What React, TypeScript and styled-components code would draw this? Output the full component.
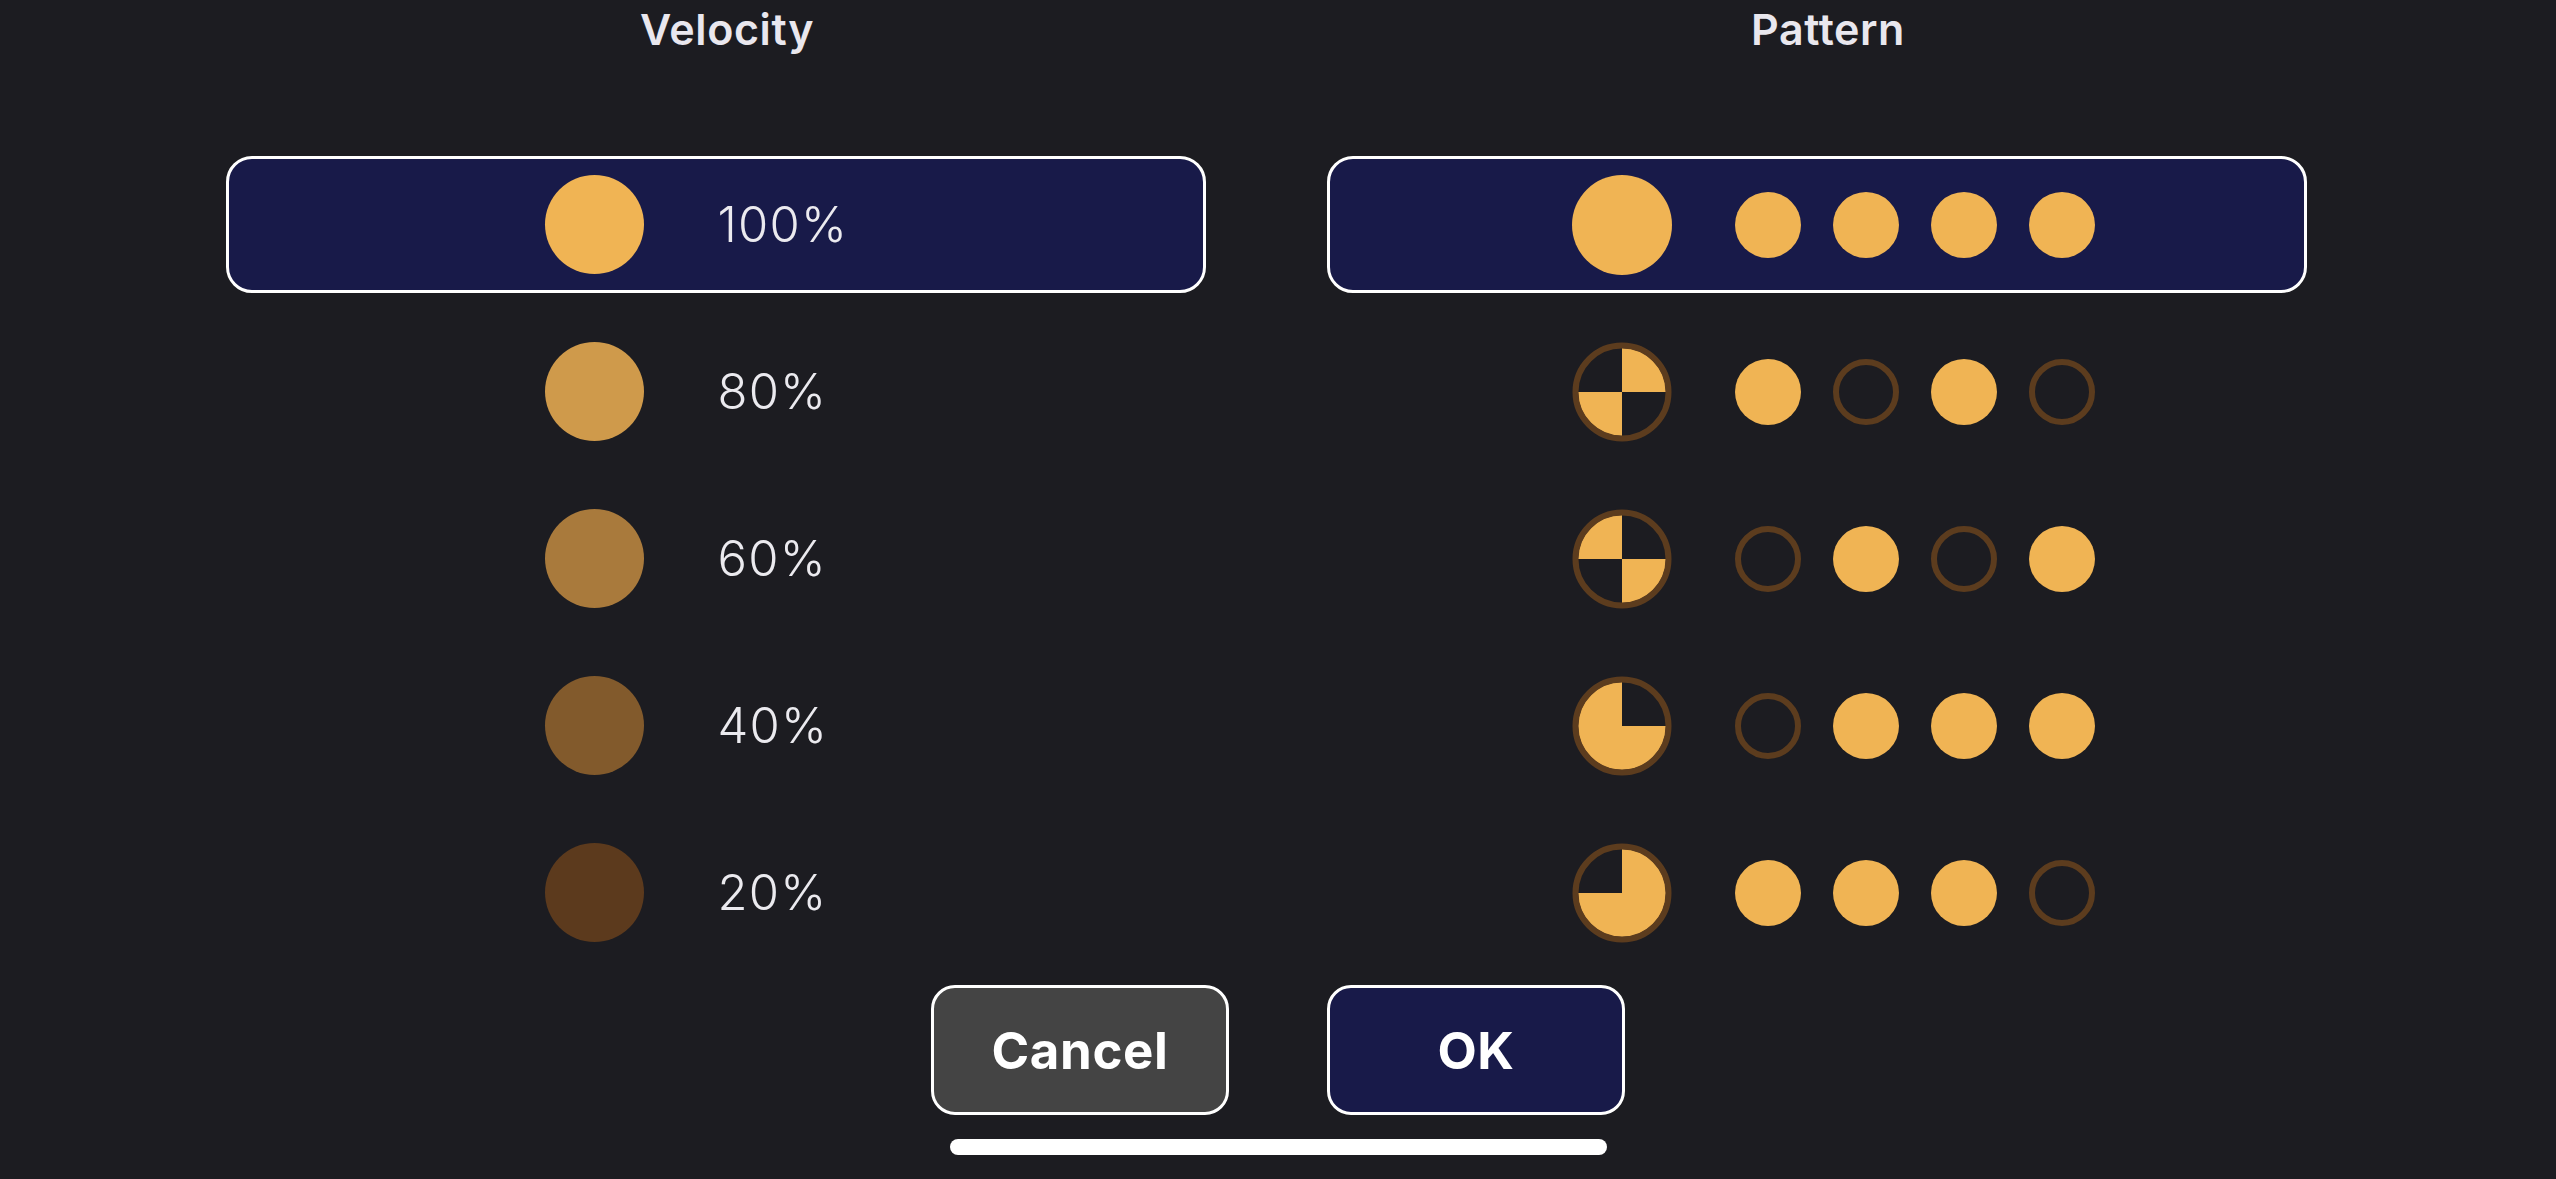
import * as React from 'react';
import styled, { createGlobalStyle } from 'styled-components';

const GlobalStyle = createGlobalStyle`
  html, body {
    margin: 0;
    padding: 0;
    background: #1c1c21;
  }
  * {
    box-sizing: border-box;
  }
`;

const ORANGE = '#f0b454';
const RING = '#5c3c1e';

type Quarter = 'tl' | 'tr' | 'bl' | 'br';

interface PatternRowData {
  filled: Quarter[];
  beats: boolean[];
}

const velocities = [
  { label: '100%', color: ORANGE },
  { label: '80%', color: '#cf9a4b' },
  { label: '60%', color: '#a97a3c' },
  { label: '40%', color: '#825a2c' },
  { label: '20%', color: '#5c3a1d' },
];

const patterns: PatternRowData[] = [
  { filled: ['tl', 'tr', 'bl', 'br'], beats: [true, true, true, true] },
  { filled: ['tr', 'bl'], beats: [true, false, true, false] },
  { filled: ['tl', 'br'], beats: [false, true, false, true] },
  { filled: ['tl', 'bl', 'br'], beats: [false, true, true, true] },
  { filled: ['tr', 'bl', 'br'], beats: [true, true, true, false] },
];

const quarterPath: Record<Quarter, string> = {
  tr: 'M50 50 L50 6 A44 44 0 0 1 94 50 Z',
  br: 'M50 50 L94 50 A44 44 0 0 1 50 94 Z',
  bl: 'M50 50 L50 94 A44 44 0 0 1 6 50 Z',
  tl: 'M50 50 L6 50 A44 44 0 0 1 50 6 Z',
};

const PieIcon: React.FC<{ filled: Quarter[]; full?: boolean }> = ({ filled, full }) => {
  if (full) {
    return (
      <svg width="100" height="100" viewBox="0 0 100 100">
        <circle cx="50" cy="50" r="50" fill={ORANGE} />
      </svg>
    );
  }
  return (
    <svg width="100" height="100" viewBox="0 0 100 100">
      {filled.map((q) => (
        <path key={q} d={quarterPath[q]} fill={ORANGE} />
      ))}
      <circle cx="50" cy="50" r="46.5" fill="none" stroke={RING} strokeWidth="6" />
    </svg>
  );
};

export default function App() {
  return (
    <Page>
      <GlobalStyle />
      <Columns>
        <Column>
          <Title>Velocity</Title>
          <List>
            {velocities.map((v, i) => (
              <Row key={v.label} selected={i === 0}>
                <VelocityDot color={v.color} />
                <Percent>{v.label}</Percent>
              </Row>
            ))}
          </List>
        </Column>
        <Column>
          <Title>Pattern</Title>
          <List>
            {patterns.map((p, i) => (
              <Row key={i} selected={i === 0} shift={32}>
                <PieIcon filled={p.filled} full={i === 0} />
                <Beats>
                  {p.beats.map((on, j) => (
                    <Beat key={j} on={on} />
                  ))}
                </Beats>
              </Row>
            ))}
          </List>
        </Column>
      </Columns>
      <Footer>
        <Buttons>
          <Button variant="cancel">Cancel</Button>
          <Button variant="ok">OK</Button>
        </Buttons>
        <HomeIndicator />
      </Footer>
    </Page>
  );
}

const Page = styled.div`
  width: 2556px;
  height: 1179px;
  background: #1c1c21;
  display: flex;
  flex-direction: column;
  font-family: Inter, 'Noto Sans', sans-serif;
  overflow: hidden;
`;

const Columns = styled.div`
  display: grid;
  grid-template-columns: 980px 980px;
  column-gap: 121px;
  padding-left: 226px;
`;

const Column = styled.div`
  display: flex;
  flex-direction: column;
`;

const Title = styled.div`
  height: 58px;
  line-height: 58px;
  text-align: center;
  color: #e9e7ee;
  font-size: 43px;
  font-weight: 600;
  letter-spacing: 0.6px;
  padding-left: 22px;
  margin-bottom: 98px;
`;

const List = styled.div`
  display: flex;
  flex-direction: column;
  gap: 30px;
`;

const Row = styled.div<{ selected?: boolean; shift?: number }>`
  height: 137px;
  display: flex;
  align-items: center;
  justify-content: center;
  padding-left: ${(p) => p.shift || 0}px;
  border-radius: 26px;
  border: 3px solid ${(p) => (p.selected ? '#ffffff' : 'transparent')};
  background: ${(p) => (p.selected ? '#181a49' : 'transparent')};
`;

const VelocityDot = styled.div<{ color: string }>`
  width: 99px;
  height: 99px;
  border-radius: 50%;
  background: ${(p) => p.color};
  flex-shrink: 0;
`;

const Percent = styled.span`
  width: 170px;
  margin-left: 74px;
  color: #ebeaef;
  font-size: 49px;
  font-weight: 300;
  letter-spacing: 1.2px;
`;

const Beats = styled.div`
  display: flex;
  gap: 32px;
  margin-left: 63px;
`;

const Beat = styled.div<{ on: boolean }>`
  width: 66px;
  height: 66px;
  border-radius: 50%;
  background: ${(p) => (p.on ? ORANGE : 'transparent')};
  border: ${(p) => (p.on ? 'none' : `6px solid ${RING}`)};
`;

const Footer = styled.div`
  display: flex;
  flex-direction: column;
  align-items: center;
  margin-top: 24px;
`;

const Buttons = styled.div`
  display: flex;
  gap: 98px;
`;

const Button = styled.button<{ variant: 'cancel' | 'ok' }>`
  width: 298px;
  height: 130px;
  border: 3px solid #ffffff;
  border-radius: 24px;
  background: ${(p) => (p.variant === 'ok' ? '#181a49' : '#444444')};
  color: #ffffff;
  font-family: Inter, 'Noto Sans', sans-serif;
  font-size: 51px;
  font-weight: 700;
  letter-spacing: 0.6px;
  padding: 0;
`;

const HomeIndicator = styled.div`
  width: 657px;
  height: 16px;
  margin-top: 24px;
  border-radius: 8px;
  background: #ffffff;
`;
